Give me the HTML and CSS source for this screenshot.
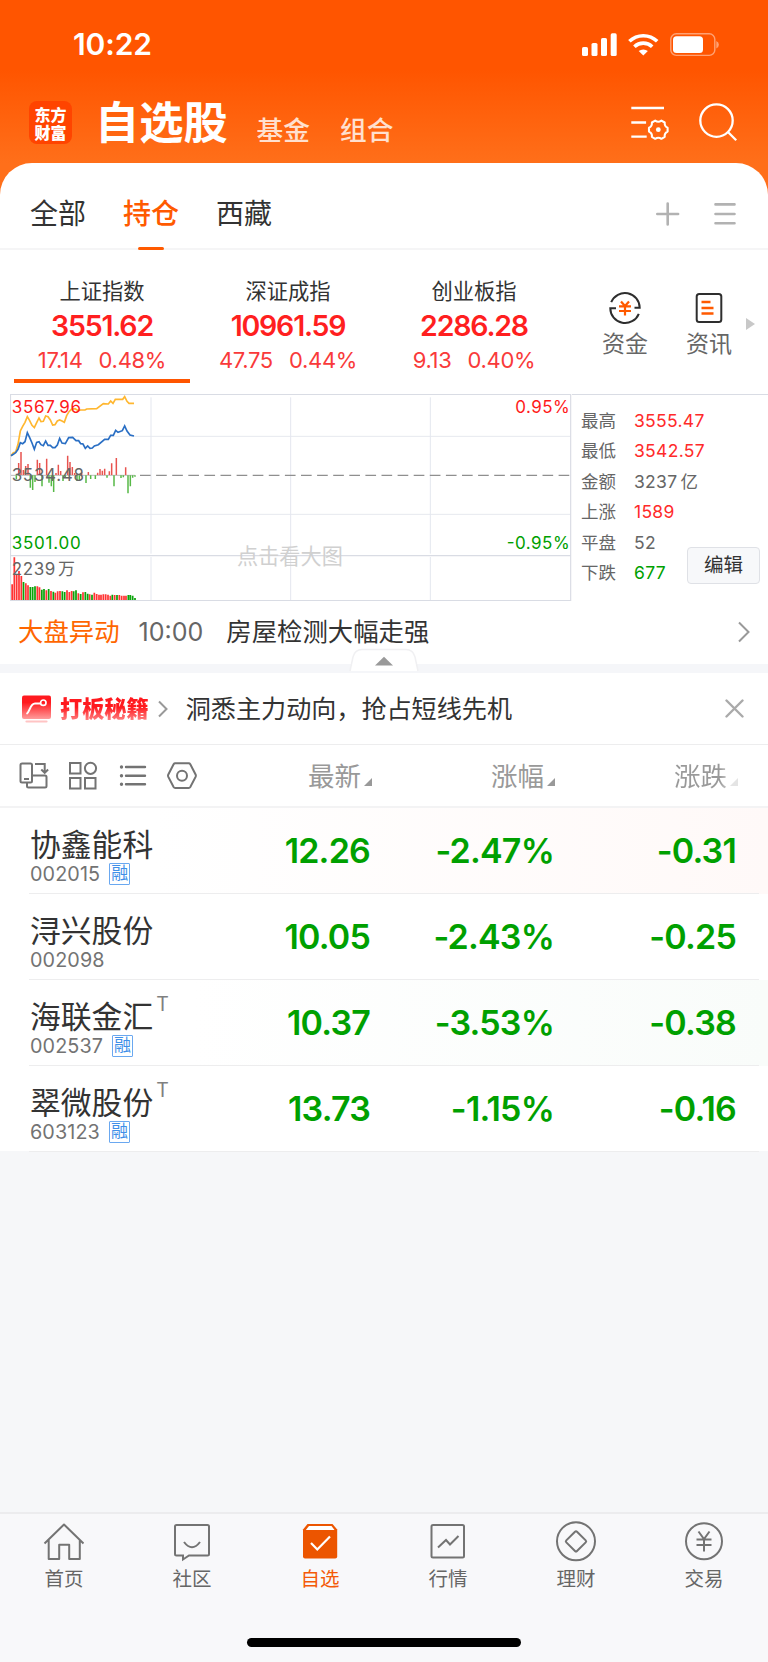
FILE: index.html
```html
<!DOCTYPE html>
<html lang="zh-CN">
<head>
<meta charset="utf-8">
<title>自选股</title>
<link rel="stylesheet" href="styles.css">
</head>
<body>

<div class="header">
	<div class="status">
		<span class="time">10:22</span>
		<svg class="status-icons" width="138" height="24" viewBox="0 0 138 24">
			<g fill="#fff">
				<rect x="0" y="14" width="6" height="9" rx="1.6"/>
				<rect x="9.5" y="10" width="6" height="13" rx="1.6"/>
				<rect x="19" y="5" width="6" height="18" rx="1.6"/>
				<rect x="28.7" y="0.3" width="6" height="22.7" rx="1.6"/>
				<path d="M61.3 22.6l-4.6-4.5a7 7 0 0 1 9.2 0z"/>
			</g>
			<g fill="none" stroke="#fff" stroke-width="3.6">
				<path d="M47.4 8.3a20 20 0 0 1 27.8 0"/>
				<path d="M52.4 13.7a12.8 12.8 0 0 1 17.8 0"/>
			</g>
			<rect x="88.8" y="0.8" width="44" height="21.6" rx="5.5" fill="none" stroke="#fff" stroke-opacity=".45" stroke-width="1.4"/>
			<rect x="91" y="3.2" width="30" height="16.8" rx="3.5" fill="#fff"/>
			<path d="M134.3 8v7.4q2.6-1.2 2.6-3.7t-2.6-3.7z" fill="#fff" fill-opacity=".45"/>
		</svg>
	</div>
	<div class="nav">
		<div class="logo">东方<br>财富</div>
		<b class="nav-title">自选股</b>
		<span class="nav-link">基金</span>
		<span class="nav-link">组合</span>
		<svg class="nav-icons" width="108" height="42" viewBox="0 0 108 42" fill="none" stroke="#fff" stroke-width="2.3">
			<path d="M1.3 6h32.7M1.3 20.5h14.8M1.3 34.7h15.4"/>
			<path d="M37.6 25.800V29.600Q34.200 31.200 34.700 34.900L31.400 36.800Q28.300 34.600 25.200 36.800L21.900 34.900Q22.400 31.200 19 29.600V25.800Q22.400 24.200 21.900 20.500L25.200 18.600Q28.300 20.800 31.400 18.600L34.700 20.500Q34.200 24.200 37.600 25.800Z" stroke-linejoin="round" stroke-width="2.1"/>
			<circle cx="28.300" cy="27.700" r="2.400" fill="#fff" stroke="none"/>
			<circle cx="86.500" cy="18.600" r="16.200"/>
			<path d="M97.700 29.800l8.500 8.500"/>
		</svg>
	</div>
</div>

<div class="sheet">
	<div class="tabs">
		<span class="tab">全部</span>
		<span class="tab on">持仓</span>
		<span class="tab">西藏</span>
		<svg class="tab-icons" width="82" height="26" viewBox="0 0 82 26" stroke="#b2b2b2" stroke-width="2.6" stroke-linecap="round">
			<path d="M1.300 13h20.800M11.700 2.600v20.800M59.500 3.400h19M59.500 13h19M59.500 22.300h19" fill="none"/>
		</svg>
	</div>

	<div class="indexes">
		<div class="idx on">
			<div class="idx-name">上证指数</div>
			<div class="idx-price">3551.62</div>
			<div class="idx-chg"><span>17.14</span><span>0.48%</span></div>
		</div>
		<div class="idx">
			<div class="idx-name">深证成指</div>
			<div class="idx-price">10961.59</div>
			<div class="idx-chg"><span>47.75</span><span>0.44%</span></div>
		</div>
		<div class="idx">
			<div class="idx-name">创业板指</div>
			<div class="idx-price">2286.28</div>
			<div class="idx-chg"><span>9.13</span><span>0.40%</span></div>
		</div>
		<div class="tool">
			<svg width="34" height="34" viewBox="0 0 34 34" fill="none" stroke="#2e2e2e" stroke-width="2">
				<path d="M3.200 11.200A14.800 14.800 0 0 1 31.700 16.800H26.500M30.800 22.800A14.800 14.800 0 0 1 2.300 17.200H8"/>
				<path d="M13 10.500l4 4.500 4-4.500M11 15.300h12M11 20h12M17 15v9.500" stroke="#ff5a00" stroke-width="2.200"/>
			</svg>
			<span>资金</span>
		</div>
		<div class="tool">
			<svg width="34" height="34" viewBox="0 0 34 34" fill="none" stroke="#2e2e2e" stroke-width="2">
				<rect x="4.700" y="3" width="24.600" height="28" rx="2.500"/>
				<path d="M9.500 11h9M9.500 17h12M9.500 22.500h12" stroke="#ff5a00" stroke-width="2.400"/>
			</svg>
			<span>资讯</span>
		</div>
		<i class="more"></i>
	</div>

	<div class="market">
		<!-- intraday chart, drawn at 3x -->
		<svg class="chart" width="562" height="207" viewBox="30 27 1686 621" fill="none">
			<path d="M33 154H1712M33 388H1712" stroke="#e6e9ee" stroke-width="3"/>
			<path d="M453 37V506M872 37V506M1291 37V506M453 516V645M872 516V645M1291 516V645" stroke="#e4e7ef" stroke-width="3"/>
			<path d="M31.500 28.500H1712V646.500H31.500ZM33 512H1712" stroke="#d9dce4" stroke-width="3.500"/>
			<path d="M33 271H405" stroke="#999" stroke-width="2"/>
			<path d="M420 271H1712" stroke="#8f8f8f" stroke-width="3.500" stroke-dasharray="32 16.300"/>
			<path d="M56 270V234M63 270V201M70 270V255M77 270V243M84 270V237M112 270V224M119 270V234M140 270V221M168 270V264M175 270V239M182 270V258M203 270V212M210 270V231M217 270V246M224 270V264M245 270V262M265 270V261M293 270V263M300 270V252M307 270V257M314 270V251M328 270V259M335 270V235M349 270V219M377 270V247" stroke="#e8534f" stroke-width="4.500"/>
			<path d="M49 271V283M91 271V308M98 271V315M105 271V291M126 271V304M147 271V293M154 271V304M161 271V321M189 271V288M196 271V276M231 271V288M238 271V288M258 271V294M272 271V282M286 271V282M321 271V278M342 271V304M363 271V279M370 271V277M384 271V325M391 271V304M398 271V278M405 271V275" stroke="#57b947" stroke-width="4.500"/>
			<path d="M36.500 645V598M43 645V517M50 645V570M57 645V558M64 645V573M77.500 645V595M84 645V601M112 645V604M118.500 645V607M139 645V616M153 645V618M166 645V623M173 645V619M180 645V618M201 645V616M208 645V621M215 645V618M235 645V625M249 645V622M269 645V628M283 645V623M290 645V627M297 645V629M303 645V629M310 645V628M317 645V628M324 645V629M331 645V632M344 645V630M358 645V630M365 645V632M372 645V632M378 645V632" stroke="#f33" stroke-width="5.200"/>
			<path d="M70.500 645V591M91 645V606M98 645V606M105 645V604M125.500 645V614M132 645V612M146 645V612M160 645V620M187 645V619M194 645V621M221 645V619M228 645V616M242 645V627M256 645V621M263 645V626M276 645V629M337 645V629M351 645V630M385 645V630M391 645V630M398 645V632M405 645V639" stroke="#0aa30a" stroke-width="5.200"/>
			<path d="M33 212L40 203 47 201 54 178 61 138 68 124 75 112 82 95 89 107 96 121 103 128 110 113 117 99 123 110 130 109 137 93 144 95 151 105 158 120 165 119 172 108 179 105 186 108 193 112 200 92 207 80 214 73 225 71 235 77 242 75 255 75 260 72 290 71 310 56 325 57 332 48 339 55 346 43 368 43 374 35 381 49 387 55 402 55" stroke="#ffb730" stroke-width="5"/>
			<path d="M33 212L40 208 47 203 54 193 61 173 68 176 75 170 82 143 89 158 96 174 103 193 110 172 117 170 123 179 130 182 137 168 144 181 151 181 158 188 165 188 172 180 179 160 186 174 196 176 206 158 218 157 228 167 236 167 242 176 249 177 256 190 263 183 270 190 277 189 283 183 295 179 314 163 325 163 332 151 340 151 347 136 354 142 367 137 374 123 381 138 390 150 402 153" stroke="#2a6fc4" stroke-width="5"/>
			<g class="chart-txt">
				<text x="35" y="83" textLength="208" fill="#ff1a1a">3567.96</text>
				<text x="35" y="288" textLength="217" fill="#666">3534.48</text>
				<text x="35" y="491" textLength="207" fill="#00a000">3501.00</text>
				<text x="35" y="569" fill="#666"><tspan textLength="131">2239</tspan><tspan x="174">万</tspan></text>
				<text x="1546" y="83" textLength="163" fill="#ff1a1a">0.95%</text>
				<text x="1520" y="491" textLength="189" fill="#00a000">-0.95%</text>
				<text class="chart-hint" x="711" y="536">点击看大图</text>
			</g>
		</svg>
		<div class="facts">
			<div><span>最高</span><em class="up">3555.47</em></div>
			<div><span>最低</span><em class="up">3542.57</em></div>
			<div><span>金额</span><em>3237<i>亿</i></em></div>
			<div><span>上涨</span><em class="up">1589</em></div>
			<div><span>平盘</span><em>52</em></div>
			<div><span>下跌</span><em class="down">677</em></div>
			<div class="edit">编辑</div>
		</div>
	</div>

	<div class="ticker">
		<span class="ticker-tag">大盘异动</span>
		<span class="ticker-time">10:00</span>
		<span>房屋检测大幅走强</span>
		<svg width="12" height="22" viewBox="0 0 12 22" fill="none" stroke="#999" stroke-width="2"><path d="M1 1.500l9.500 9.500L1 20.500"/></svg>
		<svg class="fold" width="70" height="24" viewBox="0 0 70 24">
			<path d="M1 23L4 9Q6 1.500 13 1.500H57Q64 1.500 66 9L69 23" fill="#fff" stroke="#f0f0f2" stroke-width="1.500"/>
			<path d="M26 17.500L35 8.700l9 8.800z" fill="#999"/>
		</svg>
	</div>

	<div class="banner">
		<svg width="30" height="28" viewBox="0 0 30 28" fill="none">
			<defs><linearGradient id="red" x1="0" y1="0" x2="0" y2="1"><stop offset=".3" stop-color="#ff1a1f"/><stop offset="1" stop-color="#ff9c9c"/></linearGradient></defs>
			<rect x="0" y="0.500" width="29" height="23.500" rx="2" fill="url(#red)"/>
			<path d="M4.500 19C8 17 8 8.500 13 8.500h6" stroke="#fff" stroke-width="2"/>
			<circle cx="21.300" cy="7.700" r="2.700" stroke="#fff" stroke-width="1.700"/>
			<path d="M4.500 26.500h20" stroke="#ffc4c4" stroke-width="2.200" stroke-linecap="round"/>
		</svg>
		<b class="secret">打板秘籍</b>
		<svg class="arrow" width="10" height="18" viewBox="0 0 10 18" fill="none" stroke="#999" stroke-width="2"><path d="M1 1.500l7.500 7.500L1 16.500"/></svg>
		<span>洞悉主力动向，抢占短线先机</span>
		<svg class="close" width="19" height="19" viewBox="0 0 19 19" stroke="#aaa" stroke-width="2.400" stroke-linecap="round"><path d="M1.500 1.500l16 16M17.500 1.500l-16 16"/></svg>
	</div>

	<div class="cols">
		<svg class="views" width="180" height="30" viewBox="0 0 180 30" fill="none" stroke="#737373" stroke-width="2">
			<rect x="2.5" y="2.500" width="11.500" height="19" rx="1.500"/>
			<path d="M6 18h5M17 3h9.700v8.500M23.300 8.500l3.400 3.400 3.400-3.400M14 14.500H27q1.500 0 1.500 1.500V25q0 1.500-1.500 1.500H10.500Q9 26.500 9 25V21.500"/>
			<rect x="52" y="2" width="10.500" height="10.500"/><circle cx="72.500" cy="7.300" r="5.600"/>
			<rect x="52" y="17" width="10.500" height="10.500"/><rect x="67" y="17" width="10.500" height="10.500"/>
			<path d="M108 6h19M108 14.700h19M108 23.300h19" stroke-width="2.400" stroke-linecap="round"/>
			<path d="M103.500 6h.01M103.500 14.700h.01M103.500 23.300h.01" stroke-width="3.400" stroke-linecap="round"/>
			<path d="M157.200 2.300h13.500q1 0 1.600 1l5.400 10.400q.4 1 0 2L172.300 26q-.6 1-1.600 1H157.200q-1 0-1.600-1L150.200 15.700q-.4-1 0-2l5.400-10.400q.6-1 1.600-1z"/>
			<circle cx="164" cy="14.700" r="5"/>
		</svg>
		<span class="col">最新</span>
		<span class="col">涨幅</span>
		<span class="col last">涨跌</span>
	</div>

	<div class="row hot">
		<div class="stock"><div class="name">协鑫能科</div><div class="code">002015<i>融</i></div></div>
		<b>12.26</b><b>-2.47%</b><b>-0.31</b>
	</div>
	<div class="row">
		<div class="stock"><div class="name">浔兴股份</div><div class="code">002098</div></div>
		<b>10.05</b><b>-2.43%</b><b>-0.25</b>
	</div>
	<div class="row cold">
		<div class="stock"><div class="name">海联金汇<sup>T</sup></div><div class="code">002537<i>融</i></div></div>
		<b>10.37</b><b>-3.53%</b><b>-0.38</b>
	</div>
	<div class="row">
		<div class="stock"><div class="name">翠微股份<sup>T</sup></div><div class="code">603123<i>融</i></div></div>
		<b>13.73</b><b>-1.15%</b><b>-0.16</b>
	</div>
</div>

<div class="tabbar">
	<div class="bar-items">
		<div class="bar-item">
			<svg width="42" height="42" viewBox="0 0 42 42" fill="none" stroke="#737373" stroke-width="2">
				<path d="M1.500 22.500L21 3.500l19.500 19M5.700 19V38h10.500V23.800h10V38h10.600V19" stroke-linejoin="round"/>
			</svg>首页
		</div>
		<div class="bar-item">
			<svg width="42" height="42" viewBox="0 0 42 42" fill="none" stroke="#737373" stroke-width="2">
				<path d="M5.500 4h31q1.500 0 1.500 1.500V33q0 1.500-1.500 1.500H18L12 38.500V34.500H5.500Q4 34.500 4 33V5.500Q4 4 5.500 4z"/>
				<path d="M13 21q8 10.500 16 0"/>
			</svg>社区
		</div>
		<div class="bar-item on">
			<svg width="42" height="42" viewBox="0 0 42 42" fill="none">
				<path d="M8.500 3H33.500L38.200 8.500V35.500q0 2-2 2H6q-2 0-2-2V8.500z" fill="#ec5500"/>
				<path d="M10 5h22.500l3 4H6.800z" fill="#fff"/>
				<path d="M12 22l6.300 6.500L31 15.500" stroke="#fff" stroke-width="2.200"/>
			</svg>自选
		</div>
		<div class="bar-item">
			<svg width="42" height="42" viewBox="0 0 42 42" fill="none" stroke="#737373" stroke-width="2">
				<rect x="4.500" y="4" width="32.500" height="32.500" rx="1.500"/>
				<path d="M11 26.500l8-7.500 4 4.500 8.500-8.500"/>
			</svg>行情
		</div>
		<div class="bar-item">
			<svg width="42" height="42" viewBox="0 0 42 42" fill="none" stroke="#737373" stroke-width="2">
				<circle cx="21" cy="20.300" r="19"/>
				<path d="M20 10.800q1-1 2 0l8.700 8.600q1 1 0 2L22 30q-1 1-2 0l-8.700-8.600q-1-1 0-2z"/>
			</svg>理财
		</div>
		<div class="bar-item">
			<svg width="42" height="42" viewBox="0 0 42 42" fill="none" stroke="#737373" stroke-width="2">
				<circle cx="21" cy="20.300" r="18"/>
				<path d="M15.500 10.500L21 18l5.500-7.500M13.500 18.500h15M13.500 24h15M21 18v12.500"/>
			</svg>交易
		</div>
	</div>
	<div class="home-line"></div>
</div>

</body>
</html>
```
FILE: styles.css
```css
* {
	box-sizing: border-box;
}
body {
	margin: 0;
	width: 768px;
	height: 1662px;
	display: flex;
	flex-direction: column;
	background: #f6f7f9;
	font-family: Inter, "Noto Sans CJK SC", sans-serif;
	color: #333;
	overflow: hidden;
}
svg {
	display: block;
	flex: none;
}
em, i {
	font-style: normal;
}

/* header */
.header {
	height: 203px;
	margin-bottom: -40px;
	background: linear-gradient(#ff5500 0, #ff5500 70px, #ff6f1a 163px);
	color: #fff;
}
.status {
	height: 88px;
	display: flex;
	align-items: center;
	justify-content: space-between;
	padding: 0 48px 0 73px;
}
.time {
	font-size: 30px;
	font-weight: 600;
	letter-spacing: -0.1px;
}
.status-icons {
	margin-top: 1px;
}
.nav {
	height: 70px;
	display: flex;
	align-items: center;
	padding: 0 30px 0 29px;
}
.logo {
	width: 43px;
	height: 43px;
	border-radius: 8px;
	background: #ff4400;
	margin-top: -1px;
	padding-top: 4px;
	font: 900 16px/18px "Noto Sans CJK SC", sans-serif;
	text-align: center;
}
.nav-title {
	margin: 0 29px 0 23px;
	font-size: 44.200px;
	font-weight: 700;
	line-height: 64px;
}
.nav-link {
	margin: 13px 30px 0 0;
	font-size: 26.700px;
	font-weight: 500;
	line-height: 38px;
	color: #ffe0cf;
}
.nav-icons {
	margin-left: auto;
}

/* white sheet */
.sheet {
	background: #fff;
	border-radius: 32px 32px 0 0;
	height: 988px;
}
.tabs {
	height: 87px;
	display: flex;
	align-items: center;
	padding: 0 30px;
	border-bottom: 2px solid #f5f5f6;
}
.tab {
	height: 87px;
	margin-right: 37px;
	font-size: 28px;
	line-height: 105px;
}
.tab.on {
	color: #ff5a00;
	font-weight: 500;
}
.tab.on::after {
	content: "";
	display: block;
	width: 26px;
	height: 3px;
	margin: -20px auto 0;
	border-radius: 2px;
	background: #ff5a00;
}
.tab-icons {
	margin: 17px 0 0 auto;
}

/* indexes */
.indexes {
	height: 144px;
	display: flex;
	padding-left: 9px;
}
.idx {
	width: 186px;
	padding-top: 25px;
	text-align: center;
	color: #ff1f1f;
}
.idx.on::after {
	content: "";
	display: block;
	width: 176px;
	height: 4px;
	margin: 4px 0 0 5px;
	background: #ff5500;
}
.idx-name {
	font-size: 21.300px;
	line-height: 32px;
	color: #333;
}
.idx-price {
	font-size: 28.500px;
	font-weight: 600;
	line-height: 37px;
	letter-spacing: -1.200px;
}
.idx-chg {
	display: flex;
	justify-content: center;
	gap: 16px;
	padding-top: 2px;
	font-size: 22px;
	line-height: 29px;
	letter-spacing: -0.300px;
	color: #f93a3a;
}
.tool {
	width: 84px;
	padding-top: 41px;
	display: flex;
	flex-direction: column;
	align-items: center;
	font-size: 23px;
	line-height: 36px;
	color: #666;
}
.idx + .tool {
	margin-left: 16px;
}
.tool span {
	margin-top: 1px;
}
.more {
	margin: 68px 0 0 -5px;
	height: 12px;
	border: 6px solid transparent;
	border-left: 9px solid #c8c8c8;
	border-right: 0;
}

/* market panel */
.market {
	display: flex;
	height: 207px;
}
.chart {
	margin-left: 10px;
}
.chart-txt {
	font-size: 51px;
}
.chart-hint {
	font-size: 63.500px;
	fill: #d0d0d0;
}
.facts {
	position: relative;
	flex: 1;
	padding: 11px 0 0 9px;
	border-top: 1px solid #d9dce4;
	font-size: 17.500px;
	line-height: 30.400px;
	color: #666;
}
.facts div {
	display: flex;
	gap: 18px;
}
.facts em {
	letter-spacing: 0.300px;
}
.facts i {
	margin-left: 3px;
}
.facts .up {
	color: #ff2a2a;
}
.facts .down {
	color: #00a000;
}
.facts .edit {
	position: absolute;
	left: 115px;
	top: 152px;
	width: 73px;
	height: 37px;
	justify-content: center;
	border: 1px solid #dfe1e6;
	border-radius: 4px;
	background: #f7f8fa;
	font-size: 19.500px;
	line-height: 34px;
	color: #333;
}

/* ticker */
.ticker {
	position: relative;
	height: 72px;
	padding: 0 18px 2px 18px;
	display: flex;
	align-items: center;
	border-bottom: 9px solid #f5f6f9;
	font-size: 25.400px;
	line-height: 38px;
}
.ticker-tag {
	color: #f60;
}
.ticker-time {
	margin: 0 23px 0 19px;
	color: #666;
	font-size: 25px;
}
.ticker > svg:nth-of-type(1) {
	margin-left: auto;
}
.fold {
	position: absolute;
	left: 349px;
	top: 47px;
}

/* banner */
.banner {
	height: 72px;
	display: flex;
	align-items: center;
	padding: 0 24px 0 22px;
	border-bottom: 1px solid #ededee;
	font-size: 25.100px;
	line-height: 38px;
}
.secret {
	margin: 0 9px 0 8px;
	font-size: 22.200px;
	font-weight: 900;
	background: linear-gradient(#ff1a1f 45%, #ff8f8f 85%);
	-webkit-background-clip: text;
	color: transparent;
}
.arrow {
	margin-right: 18px;
}
.close {
	margin-left: auto;
}

/* table */
.cols {
	height: 63px;
	display: flex;
	align-items: center;
	padding-left: 18px;
	border-bottom: 2px solid #f3f3f4;
	font-size: 26.500px;
	line-height: 38px;
	color: #999;
}
.col {
	width: 183px;
	text-align: right;
}
.views + .col {
	width: 174px;
}
.col::after {
	content: "";
	display: inline-block;
	margin-left: 3px;
	border: 4px solid #999;
	border-top-color: transparent;
	border-left-color: transparent;
}
.col.last {
	background: linear-gradient(90deg, #999 90%, #e8e8e8 97%);
	-webkit-background-clip: text;
	color: transparent;
}
.col.last::after {
	border-right-color: #e4e4e4;
	border-bottom-color: #e4e4e4;
}
.row {
	height: 86px;
	display: flex;
	padding-left: 30px;
	background: linear-gradient(#ededee, #ededee) 29px 100% / 730px 1px no-repeat;
}
.row.hot {
	background: linear-gradient(#ededee, #ededee) 29px 100% / 730px 1px no-repeat, linear-gradient(90deg, #fff 20%, #fff9f8);
}
.row.cold {
	background: linear-gradient(#ededee, #ededee) 29px 100% / 730px 1px no-repeat, linear-gradient(90deg, #fff 25%, #f9fcfa);
}
.row b {
	width: 182px;
	padding-top: 21px;
	text-align: right;
	font-size: 34px;
	font-weight: 600;
	line-height: 44px;
	letter-spacing: -0.800px;
	color: #00a000;
}
.row .stock + b {
	width: 170px;
}
.row .stock + b + b {
	width: 184px;
}
.stock {
	width: 170px;
}
.name {
	height: 55px;
	padding-top: 14px;
	font-size: 30.800px;
	line-height: 46px;
	white-space: nowrap;
}
.name sup {
	position: relative;
	top: -17px;
	margin-left: 3px;
	font-size: 19.500px;
	line-height: 0;
	vertical-align: baseline;
	color: #808080;
}
.code {
	display: flex;
	align-items: center;
	height: 22px;
	font-size: 19.800px;
	letter-spacing: 0.100px;
	color: #737373;
}
.code i {
	width: 21px;
	height: 22px;
	margin-left: 9px;
	border: 1px solid #6aa8f0;
	border-radius: 1px;
	font-size: 17px;
	line-height: 19px;
	text-align: center;
	letter-spacing: 0;
	color: #3f8fe8;
}

/* bottom bar */
.tabbar {
	margin-top: auto;
	height: 150px;
	border-top: 2px solid #ececee;
	background: #f8f8fa;
}
.bar-items {
	display: flex;
}
.bar-item {
	width: 128px;
	padding-top: 7px;
	display: flex;
	flex-direction: column;
	align-items: center;
	font-size: 19.500px;
	line-height: 32px;
	color: #666;
}
.bar-item.on {
	color: #f45a08;
}
.home-line {
	width: 274px;
	height: 9px;
	margin: 43px 0 0 247px;
	border-radius: 5px;
	background: #000;
}
```
